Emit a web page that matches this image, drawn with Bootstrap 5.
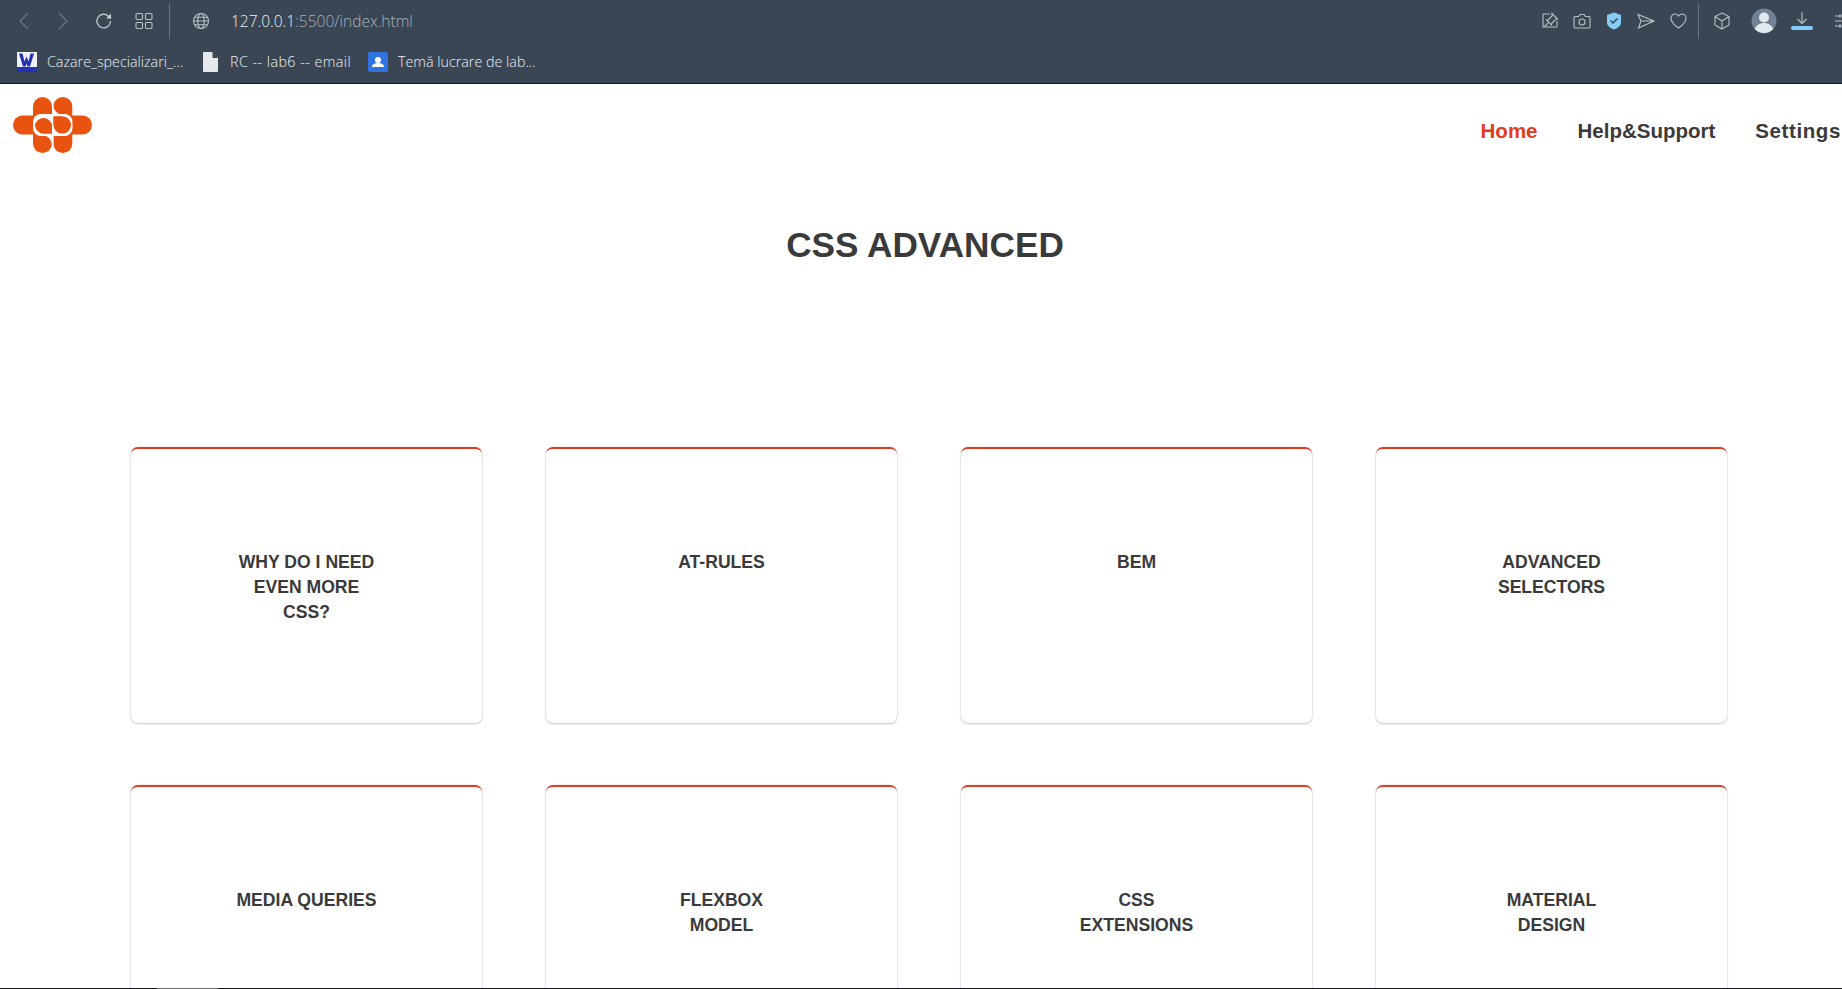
<!DOCTYPE html>
<html lang="en"><head><meta charset="utf-8"><title>CSS Advanced</title>
<link href="https://cdn.jsdelivr.net/npm/bootstrap@5.3.0/dist/css/bootstrap.min.css" rel="stylesheet">
<style>
html,body{height:989px;overflow:hidden;background:#fff}
body{font-family:"Liberation Sans",Arial,sans-serif;color:#3a3a3a}
.chrome{height:84px;background:#3a4654;border-bottom:1px solid #14181d;font-family:"Open Sans",sans-serif;font-weight:300;color:#eef1f4}
.toolrow{height:42px;padding-left:16px}
.toolrow svg{display:block;fill:none;stroke:#b9c0c7;stroke-width:1.1;flex:none}
.toolrow svg.dim{stroke:#6d7885}
.vsep{width:1px;height:36px;background:#69737f;flex:none}
.urltxt{font-size:15.5px;margin-left:21px;padding-top:1px}
.urltxt span{color:#aab2bb}
.rgt{margin-left:auto}
.markrow{height:39px;padding-left:17px;font-size:14.3px}
.markrow svg{flex:none;display:block}
.markrow span{margin-left:10px;white-space:nowrap}
.markrow span.mk2{margin-left:12px;width:122px;letter-spacing:.45px}
.mk1{width:140px}.mk3{width:140px}
.pagenav{height:96px;padding:13px 0 0 13px}
.linkrow{padding-top:19px;font-size:20.5px;font-weight:700;gap:40px;margin-right:1px}
.linkrow a{color:#3a3a3a;text-decoration:none;white-space:nowrap}
.linkrow a.on{color:#e03c1f}
.linkrow a.wideset{letter-spacing:.6px}
.pagetitle{font-size:35.2px;font-weight:700;text-align:center;margin:0;padding-top:43px;line-height:44px;height:267px;margin-right:-8px;color:#3a3a3a}
.tilegrid{display:grid;grid-template-columns:repeat(4,351px);column-gap:64px;row-gap:62px;padding-left:131px}
.tile{height:276px;border:0;border-top:2px solid #e03c1f;border-radius:7px;box-shadow:0 0 2px rgba(0,0,0,.18),0 1px 2px rgba(0,0,0,.18);padding-top:101px;text-align:center;font-size:17.6px;font-weight:700;line-height:25px;color:#3a3a3a}
.tile span{display:block}
.edge{height:1px;background:#14181d}
.edge i{display:block;width:61px;height:1px;margin-left:157px;background:#6a6a6a}
</style></head><body>
<div class="chrome">
 <div class="toolrow d-flex align-items-center">
  <svg class="dim" width="16" height="20" viewBox="0 0 16 20"><path d="M12 2 4 10l8 8"/></svg>
  <svg class="dim" style="margin-left:23px" width="16" height="20" viewBox="0 0 16 20"><path d="m4 2 8 8-8 8"/></svg>
  <svg width="20" height="20" viewBox="0 0 20 20" style="margin-left:23px;stroke-width:1.4"><path d="M16.5 10a6.8 6.8 0 1 1-2-4.8L17 7.5"/><path d="M17 2.5v5h-5" fill="#c9ced4" stroke="none"/></svg>
  <svg width="18" height="18" viewBox="0 0 18 18" style="margin-left:21px"><rect x="1" y="1.5" width="6.5" height="6" rx="1"/><rect x="10.5" y="1.5" width="6.5" height="6" rx="1"/><rect x="1" y="10.5" width="6.5" height="6" rx="1"/><rect x="10.5" y="10.5" width="6.5" height="6" rx="1"/></svg>
  <div class="vsep" style="margin-left:16px"></div>
  <svg width="18" height="18" viewBox="0 0 18 18" style="margin-left:22px"><circle cx="9" cy="9" r="7.5"/><ellipse cx="9" cy="9" rx="3.3" ry="7.5"/><path d="M1.5 9h15M2.5 5.3h13M2.5 12.7h13"/></svg>
  <div class="urltxt">127.0.0.1<span>:5500/index.html</span></div>
  <div class="rgt d-flex align-items-center">
   <svg width="18" height="18" viewBox="0 0 18 18"><path d="M9 2H2v13h14M16 15V9"/><path d="M11 1.500 16.500 7l-2 .5L11 11l-.5 2-5-5 2-.5L11 4z"/><path d="M7 11 3.500 14.500"/></svg>
   <svg width="18" height="16" viewBox="0 0 18 16" style="margin-left:14px"><path d="M2 3.500h3.500L7 1.500h4l1.500 2H16a1 1 0 0 1 1 1V14a1 1 0 0 1-1 1H2a1 1 0 0 1-1-1V4.500a1 1 0 0 1 1-1z"/><circle cx="9" cy="9" r="3"/></svg>
   <svg width="16" height="18" viewBox="0 0 16 18" style="margin-left:15px;stroke:#3a4654;stroke-width:1.5"><path d="M8 .5 15 3v8c0 3-4 5.500-7 6.500C5 16.500 1 14 1 11V3z" fill="#84cdf6" stroke="none"/><path d="m4.500 8.500 2.500 2.500 4.500-4.500"/></svg>
   <svg width="18" height="16" viewBox="0 0 18 16" style="margin-left:15px"><path d="M1 1.500 17 8 1.500 15 4 8zM4 8h13"/></svg>
   <svg width="17" height="16" viewBox="0 0 17 16" style="margin-left:15px"><path d="M8.500 15S1 10 1 5.300C1 2.700 3 1 5 1c1.500 0 2.700.8 3.500 2C9.300 1.800 10.500 1 12 1c2 0 4 1.700 4 4.300C16 10 8.500 15 8.500 15z"/></svg>
   <div class="vsep" style="margin-left:11px"></div>
   <svg width="16" height="18" viewBox="0 0 16 18" style="margin-left:15px"><path d="M8 1 15 4.500V13L8 17 1 13V4.500zM1 4.500 8 9l7-4.500M8 9v8"/></svg>
   <svg width="26" height="26" viewBox="0 0 26 26" style="margin-left:21px;stroke:none"><circle cx="13" cy="13" r="12.500" fill="#6f8193"/><circle cx="13" cy="9.500" r="5" fill="#e3e9ee"/><path d="M3.800 21c1.500-4 5-6 9.200-6s7.700 2 9.200 6a12.500 12.500 0 0 1-18.400 0z" fill="#e3e9ee"/></svg>
   <svg width="22" height="20" viewBox="0 0 22 20" style="margin-left:14px"><path d="M11 1v11M6.500 8l4.500 4.500L15.500 8"/><rect x="0" y="15" width="22" height="4" rx="2" fill="#84cdf6" stroke="none"/></svg>
   <svg width="15" height="16" viewBox="0 0 15 16" style="margin-left:22px;margin-right:-8px"><path d="M0 3h15M0 8h15M0 13h15M5 1v4M10 6v4M5 11v4"/></svg>
  </div>
 </div>
 <div class="markrow d-flex align-items-center">
  <svg width="20" height="20" viewBox="0 0 20 20"><rect width="20" height="20" fill="#eef0f6"/><path d="M2 1.500h3.500l2 8 2-5 2 5 2-8H17l-4 13h-2.500l-1-3-1 3H6z" fill="#2430b0"/><rect y="15" width="20" height="5" fill="#2430b0"/></svg>
  <span class="mk1">Cazare_specializari_...</span>
  <svg class="ms-3" width="15" height="20" viewBox="0 0 15 20"><path d="M0 1a1 1 0 0 1 1-1h8l6 6v13a1 1 0 0 1-1 1H1a1 1 0 0 1-1-1z" fill="#e6e9ec"/><path d="M9.500 0v6H15z" fill="#3a4654"/></svg>
  <span class="mk2">RC -- lab6 -- email</span>
  <svg class="ms-3" width="20" height="20" viewBox="0 0 20 20"><rect width="20" height="20" rx="2" fill="#2f74e0"/><circle cx="10" cy="8" r="3" fill="#fff"/><path d="M4 15c0-3 3-4 6-4s6 1 6 4z" fill="#fff"/></svg>
  <span class="mk3">Temă lucrare de lab...</span>
 </div>
</div>
<nav class="pagenav d-flex justify-content-between align-items-start">
 <svg width="79" height="56" viewBox="0 0 79 56" fill="#e8540f">
  <path d="M20 22V9.500a9.500 9.500 0 0 1 19 0V22z"/>
  <path d="M40.300 22V9.500a9.500 9.500 0 0 1 19 0V22z"/>
  <path d="M25 18.500H9.500a9.500 9.500 0 0 0 0 19H25z"/><path d="M54 18.500h15.500a9.500 9.500 0 0 1 0 19H54z"/>
  <path d="M20 34v12.500a9.500 9.500 0 0 0 19 0V34z"/>
  <path d="M40.300 34v12.500a9.500 9.500 0 0 0 19 0V34z"/>
  <rect x="20" y="17" width="39.500" height="22" rx="8" fill="#fff"/>
  <path d="M39 7.500V18h10.500A10.500 10.500 0 0 1 40.300 8zM40.300 48.500V38H29.500A10.500 10.500 0 0 1 39 48z" fill="#fff"/>
  <path d="M39 8h1.300v11H39zM39 37h1.300v11H39z" fill="#fff"/>
  <path d="M22 27.800a8.700 8.700 0 0 1 17 0v8.900h-8.500a8.700 8.700 0 0 1-8.500-8.900z"/>
  <path d="M40.300 19.200h9a8.700 8.700 0 0 1 0 17.400 8.800 8.800 0 0 1-9-8.800z"/>
 </svg>
 <div class="linkrow d-flex"><a class="on" href="#">Home</a><a href="#">Help&amp;Support</a><a class="wideset" href="#">Settings</a></div>
</nav>
<h1 class="pagetitle">CSS ADVANCED</h1>
<div class="tilegrid">
 <div class="card tile"><span>WHY DO I NEED</span><span>EVEN MORE</span><span>CSS?</span></div>
 <div class="card tile"><span>AT-RULES</span></div>
 <div class="card tile"><span>BEM</span></div>
 <div class="card tile"><span>ADVANCED</span><span>SELECTORS</span></div>
 <div class="card tile"><span>MEDIA QUERIES</span></div>
 <div class="card tile"><span>FLEXBOX</span><span>MODEL</span></div>
 <div class="card tile"><span>CSS</span><span>EXTENSIONS</span></div>
 <div class="card tile"><span>MATERIAL</span><span>DESIGN</span></div>
</div>
<div class="edge fixed-bottom"><i></i></div>
<script src="https://cdn.jsdelivr.net/npm/bootstrap@5.3.0/dist/js/bootstrap.bundle.min.js"></script>
</body></html>
